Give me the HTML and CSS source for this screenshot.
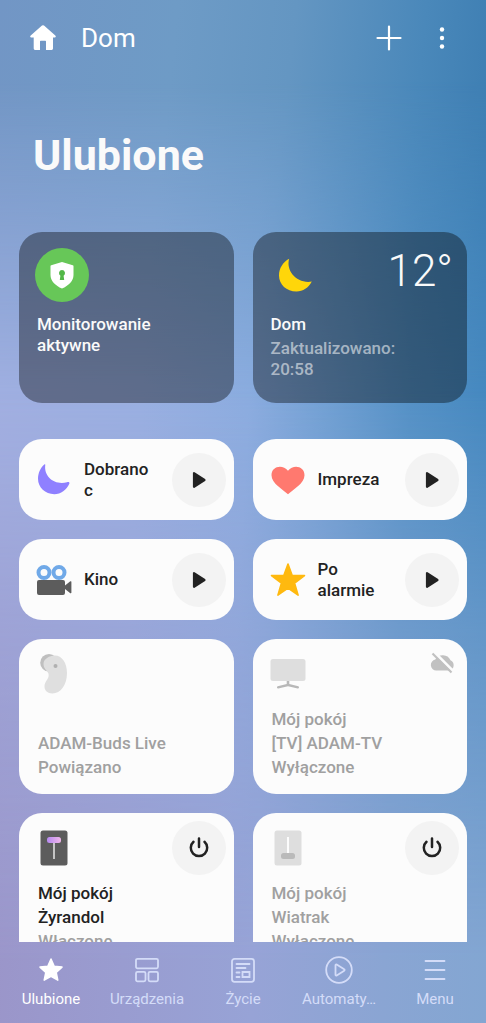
FILE: index.html
```html
<!DOCTYPE html>
<html lang="pl">
<head>
<meta charset="utf-8">
<meta name="viewport" content="width=device-width, initial-scale=1">
<title>Ulubione</title>
<link rel="stylesheet" href="styles.css">
</head>
<body>
<div class="app">
  <main class="screen">
    <header class="topbar">
      <button class="place" type="button">
        <svg class="place-icon" viewBox="0 0 28 28" aria-hidden="true"><path d="M13 1.600a1.500 1.500 0 0 1 2 0L26.300 11.400c.9.9.6 2-.5 2H24V24.600a1.300 1.300 0 0 1-1.300 1.300H17V17.500a.7.7 0 0 0-.7-.7h-4.600a.7.7 0 0 0-.7.7v8.400H6a1.300 1.300 0 0 1-1.300-1.300V13.400H2.200c-1.100 0-1.400-1.100-.5-2z" fill="#fff"/></svg>
        <span>Dom</span>
      </button>
      <button class="icon-button" type="button" aria-label="Dodaj">
        <svg width="26" height="26" viewBox="0 0 26 26"><path d="M13 1.500v23M1.500 13h23" stroke="#fff" stroke-width="2.200" stroke-linecap="round"/></svg>
      </button>
      <button class="icon-button" type="button" aria-label="Więcej opcji">
        <svg width="26" height="26" viewBox="0 0 26 26" fill="#fff"><circle cx="13" cy="4.500" r="2.200"/><circle cx="13" cy="13" r="2.200"/><circle cx="13" cy="21.500" r="2.200"/></svg>
      </button>
    </header>

    <h1 class="title">Ulubione</h1>

    <section class="grid summary">
      <article class="card info">
        <div class="info-head">
          <span class="shield">
            <svg width="26" height="28" viewBox="0 0 26 28" aria-hidden="true"><path d="M13 1l10.800 3.300c.4.100.7.500.7.900V14c0 6-5 10.800-11.500 13.500C6.500 24.800 1.500 20 1.500 14V5.200c0-.4.3-.8.700-.9z" fill="#fff"/><path d="M13 9a3.100 3.100 0 0 1 1.600 5.700l.6 4.300h-4.400l.6-4.300A3.100 3.100 0 0 1 13 9z" fill="#53b848"/></svg>
          </span>
        </div>
        <p class="info-title">Monitorowanie aktywne</p>
      </article>
      <article class="card info">
        <div class="info-head">
          <svg class="weather-icon" viewBox="0 0 54 54" aria-hidden="true"><path d="M20.200 10.800C16.500 23 28 36 42.800 33.600 39.500 40 34 43.500 27.500 43.500 17.500 43.500 10 36.500 10 27.500c0-7.200 4-13.400 10.200-16.700z" fill="#ffd60a"/></svg>
          <span class="temperature">12°</span>
        </div>
        <p class="info-title">Dom</p>
        <p class="info-note">Zaktualizowano: 20:58</p>
      </article>
    </section>

    <section class="grid tiles">
      <article class="card scene">
        <svg class="tile-icon" viewBox="0 0 36 36" aria-hidden="true"><path d="M9.300 2.700C7.500 15 19 23.500 31 20.200c1.700-.5 2.900.2 2.300 1.500C30.500 28 25 32.200 18.300 32.200 9.300 32.200 2 25.500 2 16.800 2 11 4.500 5.500 8.300 2.400c.5-.4 1.100-.3 1 .3z" fill="#8f80ff"/></svg>
        <span class="scene-name">Dobranoc</span>
        <button class="round" type="button" aria-label="Uruchom Dobranoc"><svg width="18" height="18" viewBox="0 0 18 18"><path d="M4 2.200v13.600L14.500 9z" fill="#222" stroke="#222" stroke-width="2.200" stroke-linejoin="round"/></svg></button>
      </article>
      <article class="card scene">
        <svg class="tile-icon" viewBox="0 0 36 36" aria-hidden="true"><path d="M18 32.200C13 27.500 1.500 21.500 1.500 13.200c0-9 11-11.200 16.500-4.500 5.500-6.700 16.500-4.500 16.500 4.500C34.500 21.500 23 27.500 18 32.200z" fill="#ff796f"/></svg>
        <span class="scene-name">Impreza</span>
        <button class="round" type="button" aria-label="Uruchom Impreza"><svg width="18" height="18" viewBox="0 0 18 18"><path d="M4 2.200v13.600L14.500 9z" fill="#222" stroke="#222" stroke-width="2.200" stroke-linejoin="round"/></svg></button>
      </article>
      <article class="card scene">
        <svg class="tile-icon" viewBox="0 0 36 36" aria-hidden="true"><g fill="none" stroke="#70a9e8" stroke-width="4"><circle cx="8" cy="10.500" r="5.500"/><circle cx="23" cy="10.500" r="5.500"/></g><path d="M3 18h24a2 2 0 0 1 2 2v3.500l5-4a.8.8 0 0 1 1.400.6v10.300a.8.8 0 0 1-1.400.6l-5-4V31a2 2 0 0 1-2 2H3a2 2 0 0 1-2-2V20a2 2 0 0 1 2-2z" fill="#5c5c5c"/></svg>
        <span class="scene-name">Kino</span>
        <button class="round" type="button" aria-label="Uruchom Kino"><svg width="18" height="18" viewBox="0 0 18 18"><path d="M4 2.200v13.600L14.500 9z" fill="#222" stroke="#222" stroke-width="2.200" stroke-linejoin="round"/></svg></button>
      </article>
      <article class="card scene">
        <svg class="tile-icon" viewBox="0 0 36 36" aria-hidden="true"><path d="M18 2l4.100 11.300 12.400.3-9.900 7.500 3.500 12L18 26.200 7.900 33.100l3.500-12-9.900-7.500 12.400-.3z" fill="#ffb90f" stroke="#ffb90f" stroke-width="1.600" stroke-linejoin="round"/></svg>
        <span class="scene-name">Po alarmie</span>
        <button class="round" type="button" aria-label="Uruchom Po alarmie"><svg width="18" height="18" viewBox="0 0 18 18"><path d="M4 2.200v13.600L14.500 9z" fill="#222" stroke="#222" stroke-width="2.200" stroke-linejoin="round"/></svg></button>
      </article>

      <article class="card device">
        <div class="device-head">
          <svg class="device-icon" viewBox="0 0 36 42" aria-hidden="true"><circle cx="13" cy="9.800" r="8.800" fill="#bfbfbf"/><path d="M16.500 2.800C25 1 31 9 31 20c0 12-6.500 20.500-14.500 20.500-5 0-8-3-8-7 0-5 4.200-7.200 4.200-11.500 0-4-5.200-5.200-5.200-11 0-4 4-7.400 9-8.200z" fill="#dfdfdf"/><circle cx="19.500" cy="13" r="2" fill="#b0b0b0"/></svg>
        </div>
        <p class="device-text">ADAM-Buds Live<br>Powiązano</p>
      </article>
      <article class="card device">
        <div class="device-head">
          <svg class="device-icon" viewBox="0 0 36 42" aria-hidden="true"><path d="M16.700 28h2.600v3l9 2.300c1.200.4.900 2.500-.6 2.300L18 33.200l-9.700 2.400c-1.500.2-1.800-1.900-.6-2.300l9-2.300z" fill="#b8b8b8"/><rect x=".5" y="6" width="35" height="22" rx="2.500" fill="#dedede"/></svg>
          <svg class="offline" viewBox="0 0 26 22" role="img" aria-label="Offline"><path d="M6.500 18.500A5.500 5.500 0 0 1 5.300 7.600 8.500 8.500 0 0 1 20.500 8.200 5.500 5.500 0 0 1 19.500 18.500z" fill="#c1c1c1"/><path d="M4.500.5l19 19" stroke="#fcfcfc" stroke-width="3"/><path d="M2.500 1.500l19 19" stroke="#c1c1c1" stroke-width="2.200"/></svg>
        </div>
        <p class="device-text">Mój pokój<br>[TV] ADAM-TV<br>Wyłączone</p>
      </article>
      <article class="card device">
        <div class="device-head">
          <svg class="device-icon" viewBox="0 0 36 42" aria-hidden="true"><defs><linearGradient id="lever"><stop stop-color="#b68af0"/><stop offset="1" stop-color="#f0b5ea"/></linearGradient></defs><rect x="4.500" y="3.500" width="27" height="35" rx="2.500" fill="#5c5c5c"/><path d="M18 14v18" stroke="#d0d0d0" stroke-width="1.800"/><rect x="11" y="10" width="14" height="6" rx="2.500" fill="url(#lever)"/></svg>
          <button class="round" type="button" aria-label="Zasilanie Żyrandol"><svg width="24" height="24" viewBox="0 0 24 24" fill="none" stroke="#222" stroke-width="2.500" stroke-linecap="round"><path d="M12 2.500v8.500M6.500 5.800a8.200 8.200 0 1 0 11 0"/></svg></button>
        </div>
        <p class="device-text"><strong>Mój pokój<br>Żyrandol</strong><br>Włączone</p>
      </article>
      <article class="card device">
        <div class="device-head">
          <svg class="device-icon" viewBox="0 0 36 42" aria-hidden="true"><rect x="4.500" y="3.500" width="27" height="35" rx="2.500" fill="#dedede"/><path d="M18 10v17" stroke="#fff" stroke-width="1.800"/><rect x="11" y="26" width="14" height="6" rx="2.500" fill="#bababa"/></svg>
          <button class="round" type="button" aria-label="Zasilanie Wiatrak"><svg width="24" height="24" viewBox="0 0 24 24" fill="none" stroke="#222" stroke-width="2.500" stroke-linecap="round"><path d="M12 2.500v8.500M6.500 5.800a8.200 8.200 0 1 0 11 0"/></svg></button>
        </div>
        <p class="device-text">Mój pokój<br>Wiatrak<br>Wyłączone</p>
      </article>
    </section>
  </main>

  <nav class="tabs">
    <a class="tab current" href="#ulubione" aria-current="page">
      <svg width="28" height="28" viewBox="0 0 28 28" aria-hidden="true"><path d="M14 3l3.200 7.300 7.800.8-5.800 5.300 1.600 7.800L14 20.300l-6.800 3.900 1.600-7.800L3 11.100l7.800-.8z" fill="#fff" stroke="#fff" stroke-width="1.500" stroke-linejoin="round"/></svg>
      <span>Ulubione</span>
    </a>
    <a class="tab" href="#urzadzenia">
      <svg width="28" height="28" viewBox="0 0 28 28" fill="none" stroke="currentColor" stroke-width="1.800" aria-hidden="true"><rect x="3" y="2.800" width="22" height="9.500" rx="1.500"/><rect x="3" y="15.800" width="9.500" height="9.500" rx="1.500"/><rect x="15.500" y="15.800" width="9.500" height="9.500" rx="1.500"/></svg>
      <span>Urządzenia</span>
    </a>
    <a class="tab" href="#zycie">
      <svg width="28" height="28" viewBox="0 0 28 28" fill="none" stroke="currentColor" stroke-width="1.800" aria-hidden="true"><rect x="3" y="2.800" width="22" height="23" rx="2.500"/><path d="M7.500 8h13M7.500 12h9M7.500 16.500h3M7.500 21h3" stroke-linecap="round"/><path d="M13.500 16h7v5h-7z"/></svg>
      <span>Życie</span>
    </a>
    <a class="tab" href="#automatyzacje">
      <svg width="28" height="28" viewBox="0 0 28 28" fill="none" stroke="currentColor" stroke-width="1.800" stroke-linejoin="round" aria-hidden="true"><circle cx="14" cy="14" r="12.800"/><path d="M10.500 9.200v9.600a.8.8 0 0 0 1.200.6l7.500-4.700a.8.8 0 0 0 0-1.400l-7.500-4.700a.8.8 0 0 0-1.200.6z"/></svg>
      <span>Automaty…</span>
    </a>
    <a class="tab" href="#menu">
      <svg width="28" height="28" viewBox="0 0 28 28" stroke="currentColor" stroke-width="1.800" stroke-linecap="round" aria-hidden="true"><path d="M4.500 5h19M4.500 14h19M4.500 23h19"/></svg>
      <span>Menu</span>
    </a>
  </nav>
</div>
</body>
</html>
```

FILE: styles.css
```css
* {
  box-sizing: border-box;
}

body {
  margin: 0;
  font-family: Roboto, "Noto Sans", sans-serif;
  color: #222;
}

h1,
p {
  margin: 0;
}

button {
  padding: 0;
  border: 0;
  background: none;
  font: inherit;
  color: inherit;
  cursor: pointer;
}

svg {
  display: block;
  flex: none;
}

/* Wallpaper: three horizontal blends that fade into one another downwards */
.app {
  position: relative;
  isolation: isolate;
  display: flex;
  flex-direction: column;
  height: 100vh;
  background: linear-gradient(96deg, #7296c5 0%, #6e9bc6 30%, #6496c2 50%, #4a88ba 72%, #2f73aa 100%);
}

.app::before,
.app::after {
  content: "";
  position: absolute;
  inset: 0;
  z-index: -1;
}

.app::before {
  background: linear-gradient(93deg, #a3b0e2 0%, #9ab0e2 30%, #8cade0 50%, #72a1d4 64%, #5491c6 80%, #4086be 100%);
  mask-image: linear-gradient(transparent 8%, #000 40%);
}

.app::after {
  background: linear-gradient(92deg, #9b94c8 0%, #999cd0 30%, #97a3d6 55%, #8aa5d3 80%, #83a6d2 100%);
  mask-image: linear-gradient(transparent 38%, rgb(0 0 0 / 50%) 62%, #000 94%);
}

.screen {
  flex: 1;
  min-height: 0;
  overflow: hidden;
}

.topbar {
  display: flex;
  align-items: center;
  height: 76px;
  padding: 0 30px 0 29px;
  color: #fff;
}

.place {
  display: flex;
  align-items: center;
  gap: 24px;
  margin-right: auto;
  font-size: 26px;
  line-height: 32px;
}

.place-icon {
  width: 28px;
  height: 28px;
}

.icon-button {
  display: grid;
  place-items: center;
  width: 28px;
  height: 48px;
  margin-left: 25px;
}

.title {
  padding: 53px 33px 51px;
  font-size: 43px;
  line-height: 52px;
  font-weight: 700;
  color: #fafafa;
}

.grid {
  display: grid;
  grid-template-columns: repeat(2, minmax(0, 1fr));
  gap: 19px;
  padding: 0 19px;
}

.summary {
  margin-bottom: 36px;
}

.card {
  border-radius: 23px;
  background: #fcfcfc;
  font-size: 17px;
  font-weight: 500;
}

.info {
  min-height: 171px;
  padding: 16px 14px 12px 16px;
  background: rgb(0 0 0 / 38%);
  color: #fafafa;
  line-height: 21px;
}

.info-head {
  display: flex;
  justify-content: space-between;
  height: 54px;
  margin-bottom: 12px;
}

.info-title,
.info-note {
  max-width: 150px;
  padding-left: 2px;
}

.info-note {
  margin-top: 3px;
  color: rgb(255 255 255 / 55%);
}

.shield {
  display: grid;
  place-items: center;
  width: 54px;
  height: 54px;
  border-radius: 50%;
  background: #67c758;
}

.weather-icon {
  width: 54px;
  height: 54px;
}

.temperature {
  font-size: 44px;
  line-height: 46px;
  font-weight: 300;
}

.scene {
  display: flex;
  align-items: center;
  min-height: 81px;
  padding: 0 8px 0 17px;
}

.tile-icon {
  width: 36px;
  height: 36px;
}

.scene-name {
  flex: 1;
  min-width: 0;
  margin: 0 16px 0 12px;
  line-height: 21px;
  overflow-wrap: anywhere;
}

.round {
  display: grid;
  flex: none;
  place-items: center;
  width: 54px;
  height: 54px;
  border-radius: 50%;
  background: #f3f3f3;
}

.device {
  display: flex;
  flex-direction: column;
  justify-content: space-between;
  min-height: 155px;
  padding: 8px 8px 15px 17px;
}

.device-head {
  display: flex;
  align-items: center;
  justify-content: space-between;
  height: 54px;
}

.device-icon {
  width: 36px;
  height: 42px;
}

.offline {
  align-self: flex-start;
  width: 26px;
  height: 22px;
  margin: 5px 3px 0 0;
}

.device-text {
  padding-left: 2px;
  line-height: 24px;
  color: #a0a0a0;
}

.device-text strong {
  font-weight: 500;
  color: #222;
}

.tabs {
  display: grid;
  grid-template-columns: repeat(5, minmax(0, 1fr));
  padding: 14px 3px 14px;
}

.tab {
  display: flex;
  flex-direction: column;
  align-items: center;
  gap: 5px;
  font-size: 15px;
  line-height: 20px;
  color: #d4dcf8;
  text-decoration: none;
}

.current {
  color: #fff;
}
```
